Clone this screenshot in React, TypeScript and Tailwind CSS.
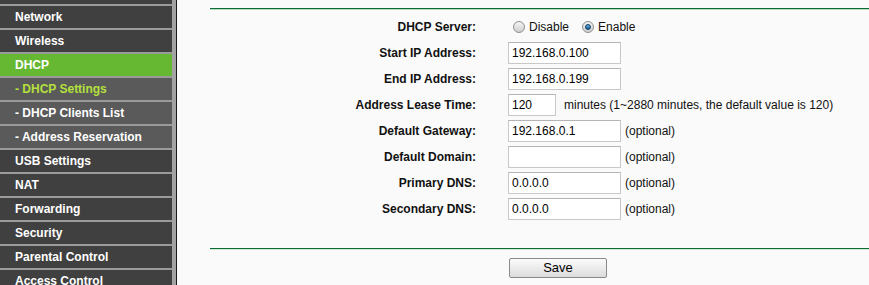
import React from 'react';

const menu = [
  { label: 'Network', kind: 'main' },
  { label: 'Wireless', kind: 'main' },
  { label: 'DHCP', kind: 'active' },
  { label: '- DHCP Settings', kind: 'subActive' },
  { label: '- DHCP Clients List', kind: 'sub' },
  { label: '- Address Reservation', kind: 'sub' },
  { label: 'USB Settings', kind: 'main' },
  { label: 'NAT', kind: 'main' },
  { label: 'Forwarding', kind: 'main' },
  { label: 'Security', kind: 'main' },
  { label: 'Parental Control', kind: 'main' },
  { label: 'Access Control', kind: 'main' },
];

function Radio({ checked }: { checked?: boolean }) {
  return (
    <span className="ml-[5px] mr-[3px] inline-flex h-[12px] w-[12px] items-center justify-center rounded-full border border-[#8f8f8f] bg-gradient-to-b from-[#f4f4f4] to-[#cfcfcf]">
      {checked && <span className="h-[6px] w-[6px] rounded-full border border-[#123c5e] bg-gradient-to-b from-[#5fb2ea] to-[#1c5f96]" />}
    </span>
  );
}

function TextBox({ value, w }: { value: string; w: string }) {
  return (
    <div className={`${w} flex h-[22px] items-center border border-[#c8c8c8] border-t-[#b4b4b4] bg-white px-[3px] text-[12px] text-black`}>
      {value}
    </div>
  );
}

function Row({ label, children }: { label: string; children: React.ReactNode }) {
  return (
    <>
      <div className="flex h-[26px] items-center justify-end text-[12px] font-bold text-[#111]">{label}</div>
      <div className="flex h-[26px] items-center text-[12px] text-[#111]">{children}</div>
    </>
  );
}

export default function App() {
  return (
    <div className="flex h-[285px] w-[869px] overflow-hidden bg-[#fafafa]" style={{ fontFamily: '"Liberation Sans", Arial, sans-serif' }}>
      <div className="w-[172px] shrink-0 bg-[#404040]">
        <div className="h-[4px] bg-[#404040]" />
        {menu.map((m) => (
          <div
            key={m.label}
            className={`flex h-[24px] items-center border-t-2 border-[#9a9a9a] pl-[15px] text-[12px] font-bold ${
              m.kind === 'active'
                ? 'bg-[#66b832] text-white'
                : m.kind === 'subActive'
                ? 'bg-[#5a5a5a] text-[#b5e03c]'
                : m.kind === 'sub'
                ? 'bg-[#5a5a5a] text-white'
                : 'bg-[#404040] text-white'
            }`}
          >
            {m.label}
          </div>
        ))}
      </div>
      <div className="w-[4px] shrink-0 bg-[#a3a3a3]" />
      <div className="w-[1px] shrink-0 bg-[#1a1a1a]" />
      <div className="flex-1 pt-[8px]">
        <div className="ml-[33px] border-t border-b border-t-[#0f6b35] border-b-[#b5dcbd]" />
        <div className="mt-[4px] grid grid-cols-[299px_1fr] gap-x-[32px]">
          <Row label="DHCP Server:">
            <Radio />
            <span className="ml-[1px]">Disable</span>
            <span className="ml-[8px]" />
            <Radio checked />
            <span className="ml-[1px]">Enable</span>
          </Row>
          <Row label="Start IP Address:">
            <TextBox value="192.168.0.100" w="w-[113px]" />
          </Row>
          <Row label="End IP Address:">
            <TextBox value="192.168.0.199" w="w-[113px]" />
          </Row>
          <Row label="Address Lease Time:">
            <TextBox value="120" w="w-[48px]" />
            <span className="ml-[8px]">minutes (1~2880 minutes, the default value is 120)</span>
          </Row>
          <Row label="Default Gateway:">
            <TextBox value="192.168.0.1" w="w-[113px]" />
            <span className="ml-[4px]">(optional)</span>
          </Row>
          <Row label="Default Domain:">
            <TextBox value="" w="w-[113px]" />
            <span className="ml-[4px]">(optional)</span>
          </Row>
          <Row label="Primary DNS:">
            <TextBox value="0.0.0.0" w="w-[113px]" />
            <span className="ml-[4px]">(optional)</span>
          </Row>
          <Row label="Secondary DNS:">
            <TextBox value="0.0.0.0" w="w-[113px]" />
            <span className="ml-[4px]">(optional)</span>
          </Row>
        </div>
        <div className="ml-[33px] mt-[26px] border-t border-b border-t-[#0f6b35] border-b-[#cfe8d3]" />
        <div className="ml-[332px] mt-[8px]">
          <button className="flex h-[20px] w-[98px] items-center justify-center rounded-[2px] border border-[#8a8a8a] bg-gradient-to-b from-[#fbfbfb] to-[#dcdcdc] text-[13px] text-black">
            Save
          </button>
        </div>
      </div>
    </div>
  );
}
